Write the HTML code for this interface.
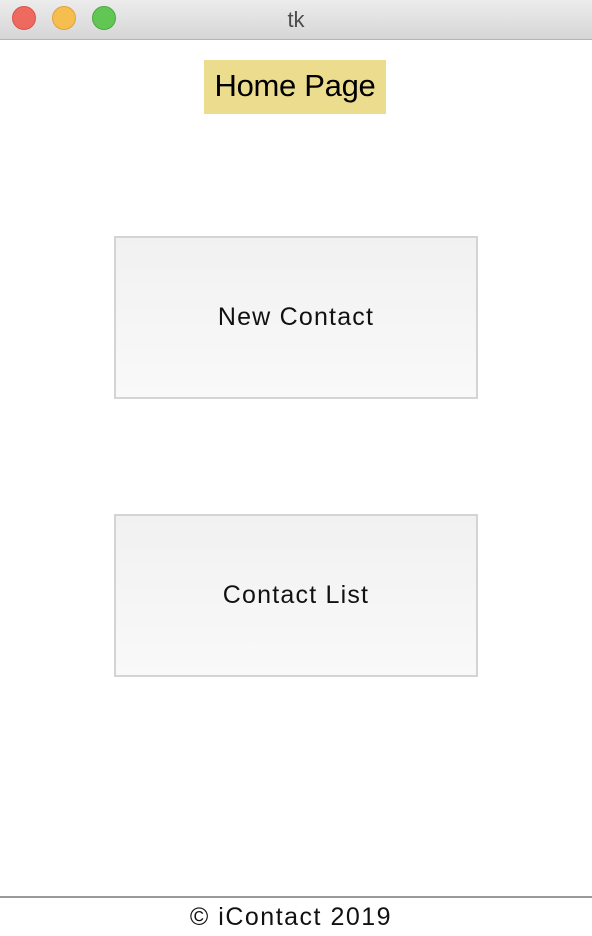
<!DOCTYPE html>
<html><head><meta charset="utf-8"><style>
*{margin:0;padding:0;box-sizing:border-box}
body{width:592px;height:936px;background:#fff;font-family:"Liberation Sans",sans-serif;position:relative;overflow:hidden}
.tb{position:absolute;left:0;top:0;width:592px;height:40px;background:linear-gradient(#ececec,#d6d6d6);border-bottom:1px solid #b4b4b4}
.dot{position:absolute;top:6px;width:24px;height:24px;border-radius:50%}
.t{position:absolute;top:7px;width:592px;text-align:center;font-size:22px;color:#4d4d4d}
.hp{position:absolute;left:204px;top:60px;width:182px;height:54px;background:#ecdc8e;font-size:31px;text-align:center;line-height:52px;color:#000;letter-spacing:-0.3px}
.btn{position:absolute;left:114px;width:364px;height:163px;border:2px solid #d4d4d4;background:linear-gradient(#f1f1f1,#f9f9f9);font-size:25px;text-align:center;line-height:159px;color:#111;letter-spacing:1.2px}
.line{position:absolute;left:0;top:896px;width:592px;height:2px;background:#999}
.ft{position:absolute;top:903px;left:-5px;width:592px;text-align:center;font-size:25px;color:#111;letter-spacing:1.5px}
</style></head><body>
<div class="tb">
<div class="dot" style="left:12px;background:#ee6a5f;border:1px solid #d9534a"></div>
<div class="dot" style="left:52px;background:#f6be4f;border:1px solid #dfa23a"></div>
<div class="dot" style="left:92px;background:#62c655;border:1px solid #4aa93f"></div>
<div class="t">tk</div>
</div>
<div class="hp">Home Page</div>
<div class="btn" style="top:236px">New Contact</div>
<div class="btn" style="top:514px">Contact List</div>
<div class="line"></div>
<div class="ft">© iContact 2019</div>
</body></html>
